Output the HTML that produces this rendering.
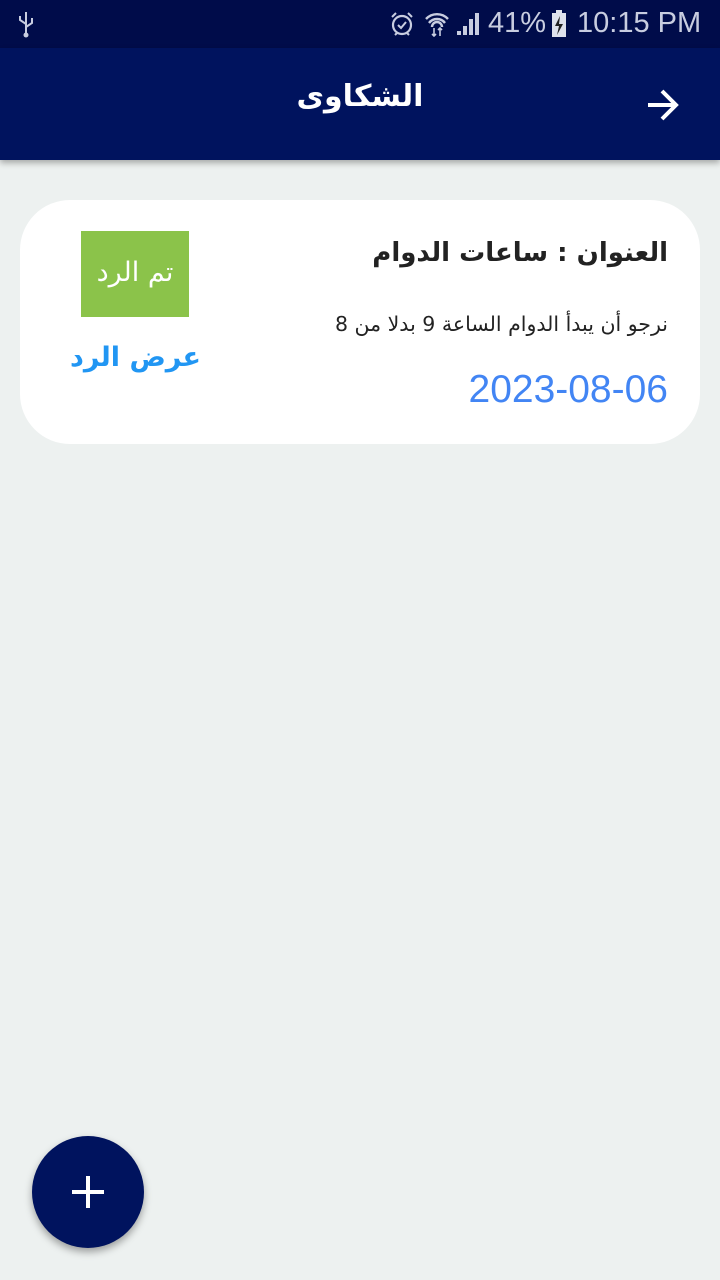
<!DOCTYPE html>
<html><head><meta charset="utf-8"><style>
*{margin:0;padding:0;box-sizing:border-box}
body{width:720px;height:1280px;background:#edf1f0;font-family:"Liberation Sans","DejaVu Sans",sans-serif;position:relative;overflow:hidden}
.sb{position:absolute;top:0;left:0;width:720px;height:48px;background:#000c4a;color:#c8cde0}
.ab{position:absolute;top:48px;left:0;width:720px;height:112px;background:#00135e;box-shadow:0 3px 6px rgba(0,0,0,.3)}
.t{position:absolute;color:#fff}
.card{position:absolute;left:20px;top:200px;width:680px;height:244px;background:#fff;border-radius:50px}
.abs{position:absolute;white-space:nowrap}
</style></head><body>
<div class="sb">
<svg class="abs" style="left:16px;top:10px" width="20" height="28"><path d="M10 2v24M10 14l-6-4V6M10 17l6-4V8" stroke="#c8cde0" stroke-width="2" fill="none"/><circle cx="10" cy="25" r="2.5" fill="#c8cde0"/></svg>
<svg class="abs" style="left:389px;top:11px" width="26" height="26"><circle cx="13" cy="14" r="9" stroke="#c8cde0" stroke-width="2.2" fill="none"/><path d="M9 14l3 3 5-6" stroke="#c8cde0" stroke-width="2" fill="none"/><path d="M3 6l4-4M23 6l-4-4M6 24l2-2M20 24l-2-2" stroke="#c8cde0" stroke-width="2"/></svg>
<svg class="abs" style="left:424px;top:11px" width="26" height="26"><path d="M2 8a15 15 0 0 1 22 0M5 12a10 10 0 0 1 16 0M8 16a5 5 0 0 1 10 0" stroke="#c8cde0" stroke-width="2.4" fill="none"/><path d="M10 17v8M8 23l2 2 2-2M16 25v-8M14 19l2-2 2 2" stroke="#c8cde0" stroke-width="1.6" fill="none"/></svg>
<svg class="abs" style="left:455px;top:11px" width="26" height="26"><path d="M2 24h4v-4H2zM8 24h4v-9H8zM14 24h4V8h-4zM20 24h4V2h-4z" fill="#c8cde0"/></svg>
<div class="abs" style="left:488px;top:7px;font-size:29px">41%</div>
<svg class="abs" style="left:551px;top:10px" width="16" height="28"><rect x="1" y="3" width="14" height="24" fill="#dfe2ec"/><rect x="5" y="0" width="6" height="3" fill="#dfe2ec"/><path d="M9 6l-5 10h4l-2 9 6-11H8z" fill="#222"/></svg>
<div class="abs" style="left:577px;top:7px;font-size:29px">10:15 PM</div>
</div>
<div class="ab">
<div class="t" style="left:0;width:720px;text-align:center;top:31px;font-size:30px;font-weight:bold;font-family:'DejaVu Sans',sans-serif">الشكاوى</div>
<svg class="abs" style="left:644px;top:38px" width="38" height="38"><path d="M4 19h28M18 5l14 14-14 14" stroke="#fff" stroke-width="4" fill="none"/></svg>
</div>
<div class="card">
<div class="abs" style="right:32px;top:38px;font-size:26px;font-weight:bold;color:#222;font-family:'DejaVu Sans',sans-serif" dir="rtl">العنوان : ساعات الدوام</div>
<div class="abs" style="right:32px;top:112px;font-size:20.5px;color:#222;font-family:'DejaVu Sans',sans-serif" dir="rtl">نرجو أن يبدأ الدوام الساعة 9 بدلا من 8</div>
<div class="abs" style="right:32px;top:168px;font-size:39px;color:#4285f4">2023-08-06</div>
<div class="abs" style="left:61px;top:31px;width:108px;height:86px;background:#8bc34a;color:#fff;font-size:27px;text-align:center;line-height:84px;font-family:'DejaVu Sans',sans-serif">تم الرد</div>
<div class="abs" style="left:50px;top:142px;width:130px;text-align:center;font-size:27px;font-weight:bold;color:#2196f3;font-family:'DejaVu Sans',sans-serif">عرض الرد</div>
</div>
<div class="abs" style="left:32px;top:1136px;width:112px;height:112px;border-radius:50%;background:#00135e;box-shadow:0 4px 8px rgba(0,0,0,.35)">
<svg width="112" height="112"><path d="M56 40v32M40 56h32" stroke="#fff" stroke-width="4"/></svg>
</div>
</body></html>
